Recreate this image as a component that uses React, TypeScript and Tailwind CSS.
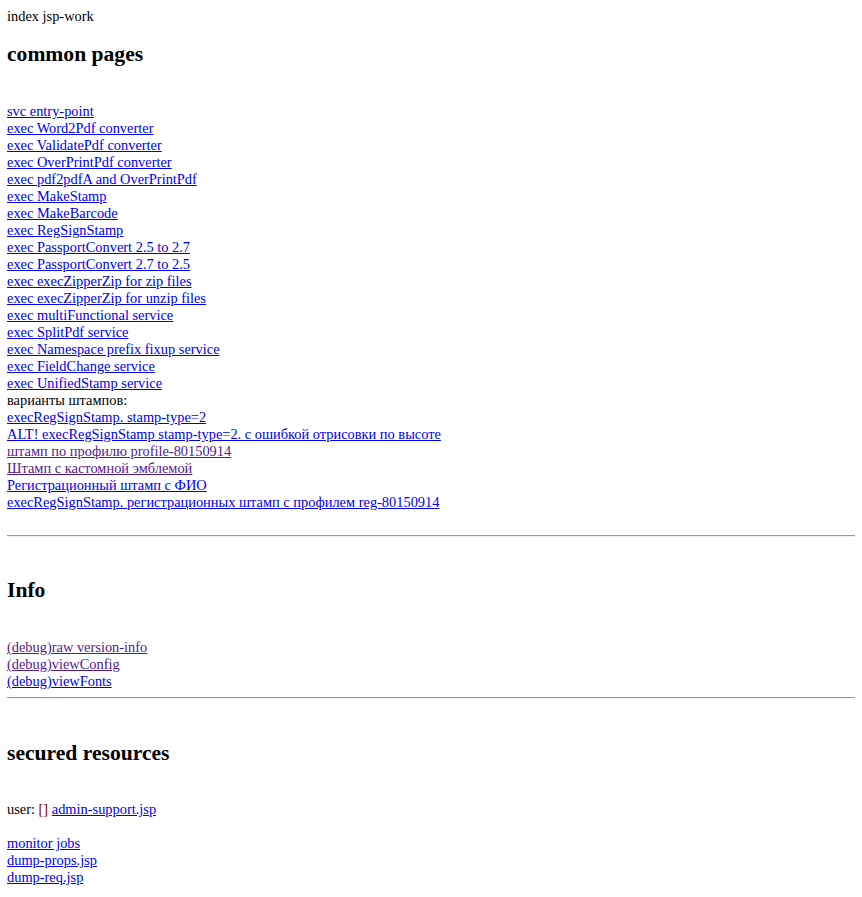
import React from "react";

const commonLinks = [
  { text: "svc entry-point" },
  { text: "exec Word2Pdf converter" },
  { text: "exec ValidatePdf converter" },
  { text: "exec OverPrintPdf converter" },
  { text: "exec pdf2pdfA and OverPrintPdf" },
  { text: "exec MakeStamp" },
  { text: "exec MakeBarcode" },
  { text: "exec RegSignStamp" },
  { text: "exec PassportConvert 2.5 to 2.7" },
  { text: "exec PassportConvert 2.7 to 2.5" },
  { text: "exec execZipperZip for zip files" },
  { text: "exec execZipperZip for unzip files" },
  { text: "exec multiFunctional service" },
  { text: "exec SplitPdf service" },
  { text: "exec Namespace prefix fixup service" },
  { text: "exec FieldChange service" },
  { text: "exec UnifiedStamp service" },
];

// варианты штампов
const stampLinks = [
  { text: "execRegSignStamp. stamp-type=2" },
  { text: "ALT! execRegSignStamp stamp-type=2. с ошибкой отрисовки по высоте" },
  { text: "штамп по профилю profile-80150914", visited: true },
  { text: "Штамп с кастомной эмблемой", visited: true },
  { text: "Регистрационный штамп с ФИО" },
  { text: "execRegSignStamp. регистрационных штамп с профилем reg-80150914" },
];

const infoLinks = [
  { text: "(debug)raw version-info", visited: true },
  { text: "(debug)viewConfig", visited: true },
  { text: "(debug)viewFonts" },
];

const securedLinks = [{ text: "monitor jobs" }, { text: "dump-props.jsp" }, { text: "dump-req.jsp" }];

function Link({ text, visited }: { text: string; visited?: boolean }) {
  return (
    <a href="#" className={`underline ${visited ? "text-[#551a8b]" : "text-[#0000ee]"}`}>
      {text}
    </a>
  );
}

function Heading({ children, className }: { children: React.ReactNode; className: string }) {
  return <h2 className={`text-[21.6px] leading-[25px] font-bold ${className}`}>{children}</h2>;
}

function Rule({ className }: { className: string }) {
  return <div className={`h-0 border-t border-t-[#9a9a9a] border-b border-b-[#eeeeee] ${className}`} />;
}

export default function App() {
  return (
    <div className="min-h-screen bg-white text-black font-['Liberation_Serif','Times_New_Roman',serif] text-[14.4px] leading-[17px] px-[7px] pt-2 pb-4">
      <div>index jsp-work</div>

      {/* common pages */}
      <Heading className="mt-[17px]">common pages</Heading>
      <div className="mt-[36px]">
        {commonLinks.map((l, i) => (
          <div key={i}>
            <Link {...l} />
          </div>
        ))}
        <div>варианты штампов:</div>
        {stampLinks.map((l, i) => (
          <div key={i}>
            <Link {...l} />
          </div>
        ))}
      </div>

      <Rule className="mt-[24px]" />

      {/* Info */}
      <Heading className="mt-[41px]">Info</Heading>
      <div className="mt-[36px]">
        {infoLinks.map((l, i) => (
          <div key={i}>
            <Link {...l} />
          </div>
        ))}
      </div>

      <Rule className="mt-[7px]" />

      {/* secured resources */}
      <Heading className="mt-[42px]">secured resources</Heading>
      <div className="mt-[35px]">
        user: <span className="text-[#800000]">[]</span> <Link text="admin-support.jsp" />
      </div>
      <div className="mt-[17px]">
        {securedLinks.map((l, i) => (
          <div key={i}>
            <Link {...l} />
          </div>
        ))}
      </div>
    </div>
  );
}
